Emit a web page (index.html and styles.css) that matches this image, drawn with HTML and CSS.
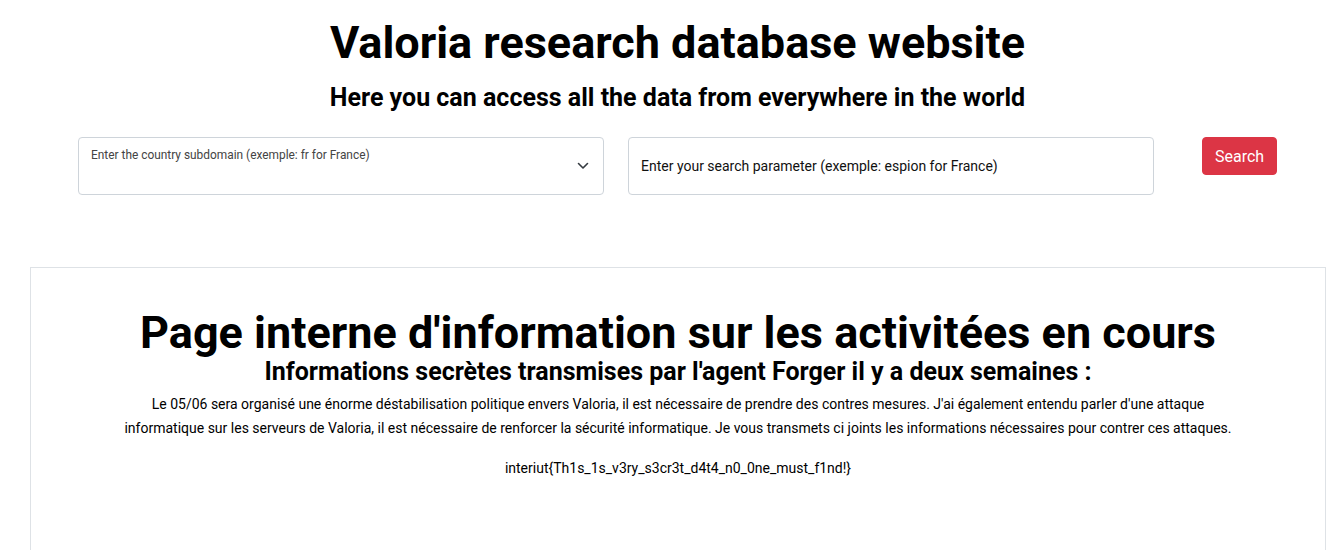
FILE: index.html
```html
<!DOCTYPE html>
<html lang="en">
<head>
<meta charset="utf-8">
<title>Valoria research database website</title>
<link rel="stylesheet" href="styles.css">
</head>
<body>
<header class="hero">
  <h1 class="title">Valoria research database website</h1>
  <h2 class="subtitle">Here you can access all the data from everywhere in the world</h2>
</header>
<form class="search-row">
  <div class="field select-field">
    <span class="field-label">Enter the country subdomain (exemple: fr for France)</span>
    <svg class="chevron" width="12" height="8" viewBox="0 0 12 8"><path d="M1.5 1.5l4.5 4.5 4.5-4.5" fill="none" stroke="#343a40" stroke-width="1.6" stroke-linecap="round" stroke-linejoin="round"/></svg>
  </div>
  <div class="field input-field">
    <span class="input-placeholder">Enter your search parameter (exemple: espion for France)</span>
  </div>
  <div class="btn-col">
    <button type="button" class="btn-search">Search</button>
  </div>
</form>
<section class="card">
  <h1 class="card-title">Page interne d'information sur les activitées en cours</h1>
  <h3 class="card-subtitle">Informations secrètes transmises par l'agent Forger il y a deux semaines :</h3>
  <p class="card-text">Le 05/06 sera organisé une énorme déstabilisation politique envers Valoria, il est nécessaire de prendre des contres mesures. J'ai également entendu parler d'une attaque informatique sur les serveurs de Valoria, il est nécessaire de renforcer la sécurité informatique. Je vous transmets ci joints les informations nécessaires pour contrer ces attaques.</p>
  <p class="card-flag">interiut{Th1s_1s_v3ry_s3cr3t_d4t4_n0_0ne_must_f1nd!}</p>
</section>
</body>
</html>
```

FILE: styles.css
```css
* { box-sizing: border-box; }
html, body { margin: 0; padding: 0; background: #fff; }
body {
  font-family: Roboto, "Liberation Sans", sans-serif;
  color: #000;
  font-size: 14px;
}
.hero { text-align: center; padding: 17px 0 0 18px; }
.title {
  margin: 0;
  font-size: 45px;
  font-weight: 700;
  line-height: 52px;
}
.subtitle {
  margin: 14px 0 0;
  font-size: 25px;
  font-weight: 700;
  line-height: 30px;
}
.search-row {
  display: flex;
  align-items: flex-start;
  margin: 24px 0 0 78px;
  gap: 24px;
}
.field {
  width: 526px;
  height: 58px;
  border: 1px solid #ced4da;
  border-radius: 4px;
  background: #fff;
  position: relative;
}
.select-field .field-label {
  position: absolute;
  left: 12px;
  top: 10px;
  font-size: 11.9px;
  color: #444;
}
.chevron { position: absolute; right: 14px; top: 24px; }
.input-field { display: flex; align-items: center; padding: 0 12px; }
.input-placeholder { font-size: 14px; color: #111; }
.btn-col { padding-left: 24px; }
.btn-search {
  background: #dc3545;
  color: #fff;
  border: 1px solid #dc3545;
  border-radius: 4px;
  font-family: Roboto, "Liberation Sans", sans-serif;
  font-size: 16px;
  height: 38px;
  padding: 0 12px;
}
.card {
  margin: 72px 11px 0 30px;
  border: 1px solid #dee2e6;
  border-bottom: none;
  height: 300px;
  text-align: center;
  padding: 39px 30px 0;
}
.card-title {
  margin: 0;
  font-size: 45px;
  font-weight: 700;
  line-height: 52px;
}
.card-subtitle {
  margin: 0;
  font-size: 25px;
  font-weight: 700;
  line-height: 26px;
}
.card-text {
  margin: 7px auto 0;
  max-width: 1110px;
  font-size: 14px;
  line-height: 24px;
}
.card-flag {
  margin: 18px 0 0;
  font-size: 14px;
  line-height: 20px;
}
```
